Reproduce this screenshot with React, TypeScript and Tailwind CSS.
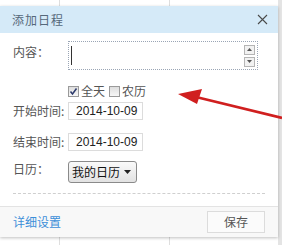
import { useState } from 'react';

const font = { fontFamily: '"Microsoft YaHei", "Noto Sans CJK SC", sans-serif' };

function Checkbox({ checked }: { checked: boolean }) {
  return (
    <span className="w-[11px] h-[11px] border border-[#9a9a9a] bg-gradient-to-b from-[#dedede] to-[#f7f7f7] flex items-center justify-center">
      {checked && (
        <svg width="9" height="9" viewBox="0 0 9 9">
          <path d="M1.5 4.5 L3.5 7 L7.5 1.5" fill="none" stroke="#2d3a6b" strokeWidth="1.5" />
        </svg>
      )}
    </span>
  );
}

function DateInput({ value }: { value: string }) {
  return (
    <div className="w-[75px] h-[18px] border border-[#dcdcdc] bg-white flex items-center pl-[7px] text-[12px] text-[#222]" style={{ fontFamily: '"Liberation Sans", sans-serif' }}>
      {value}
    </div>
  );
}

export default function App() {
  const [allDay] = useState(true);

  return (
    <div className="w-[282px] h-[245px] relative overflow-hidden bg-white" style={font}>
      {/* 日历背景 */}
      <div className="absolute inset-0 flex">
        <div className="w-[60px] h-full border-r border-[#dedede]" />
        <div className="w-[110px] h-full border-r border-[#dedede]" />
        <div className="w-[108px] h-full" />
        <div className="flex-1 h-full bg-[#e4e4e4]" />
      </div>

      {/* 添加日程 弹窗 */}
      <div className="absolute left-0 top-[6px] w-[278px] h-[231px] bg-white flex flex-col shadow-[0_1px_3px_rgba(0,0,0,0.25)]">
        <div className="h-[27px] bg-[#d5eaf8] flex items-center justify-between pl-[12px] pr-[10px] shrink-0">
          <span className="text-[12px] text-[#56687a] tracking-[1px]">添加日程</span>
          <svg width="11" height="11" viewBox="0 0 11 11">
            <path d="M1 1 L10 10 M10 1 L1 10" stroke="#4a4a4a" strokeWidth="1.1" />
          </svg>
        </div>

        <div className="flex-1 pl-[13px] pr-[13px]">
          <div className="flex mt-[8px] h-[29px]">
            <span className="w-[55px] text-[12px] leading-[14px] text-[#555] pt-[4px]">内容：</span>
            <div className="w-[190px] h-[29px] border border-dotted border-[#9aa5b5] flex items-center justify-between pl-[2px] pr-[2px]">
              <span className="w-px h-[19px] bg-[#333]" />
              <div className="flex flex-col gap-[2px]">
                <span className="w-[11px] h-[10px] border border-[#b5b5b5] bg-[#f2f2f2] flex items-center justify-center">
                  <svg width="5" height="3" viewBox="0 0 5 3"><path d="M0 3 L2.5 0 L5 3 Z" fill="#555" /></svg>
                </span>
                <span className="w-[11px] h-[10px] border border-[#b5b5b5] bg-[#f2f2f2] flex items-center justify-center">
                  <svg width="5" height="3" viewBox="0 0 5 3"><path d="M0 0 L2.5 3 L5 0 Z" fill="#555" /></svg>
                </span>
              </div>
            </div>
          </div>

          <div className="flex items-center mt-[14px] h-[14px] pl-[55px] text-[12px] text-[#555]">
            <Checkbox checked={allDay} />
            <span className="ml-[2px]">全天</span>
            <span className="ml-[4px]"><Checkbox checked={false} /></span>
            <span className="ml-[2px]">农历</span>
          </div>

          <div className="flex items-center mt-[4px] h-[18px]">
            <span className="w-[55px] text-[12px] text-[#555]">开始时间:</span>
            <DateInput value="2014-10-09" />
          </div>

          <div className="flex items-center mt-[13px] h-[18px]">
            <span className="w-[55px] text-[12px] text-[#555]">结束时间:</span>
            <DateInput value="2014-10-09" />
          </div>

          <div className="flex mt-[10px] h-[22px]">
            <span className="w-[55px] text-[12px] leading-[14px] text-[#555] pt-[1px]">日历：</span>
            <div className="w-[69px] h-[22px] border border-[#8a8a8a] rounded-[3px] bg-gradient-to-b from-[#fafafa] to-[#e2e2e2] flex items-center justify-between pl-[3px] pr-[5px] text-[12px] text-[#111]">
              <span>我的日历</span>
              <svg width="7" height="4" viewBox="0 0 7 4"><path d="M0 0 L7 0 L3.5 4 Z" fill="#222" /></svg>
            </div>
          </div>

          <div className="mt-[10px] border-t border-dashed border-[#cfcfcf]" />
        </div>

        <div className="h-[31px] border-t border-[#e3e3e3] bg-[#f8f8f8] flex items-center justify-between pl-[13px] pr-[13px] shrink-0">
          <span className="text-[12px] text-[#3d8fd8]">详细设置</span>
          <button className="w-[58px] h-[22px] border border-[#dcdcdc] bg-[#fbfbfb] text-[12px] text-[#555]">保存</button>
        </div>
      </div>

      {/* 红色箭头 */}
      <svg className="absolute left-0 top-0 pointer-events-none" width="282" height="245" viewBox="0 0 282 245">
        <path d="M282 118 L196 97" stroke="#d01f1f" strokeWidth="2.8" />
        <path d="M178 94 L202 89 L197 104 Z" fill="#d01f1f" />
      </svg>
    </div>
  );
}
